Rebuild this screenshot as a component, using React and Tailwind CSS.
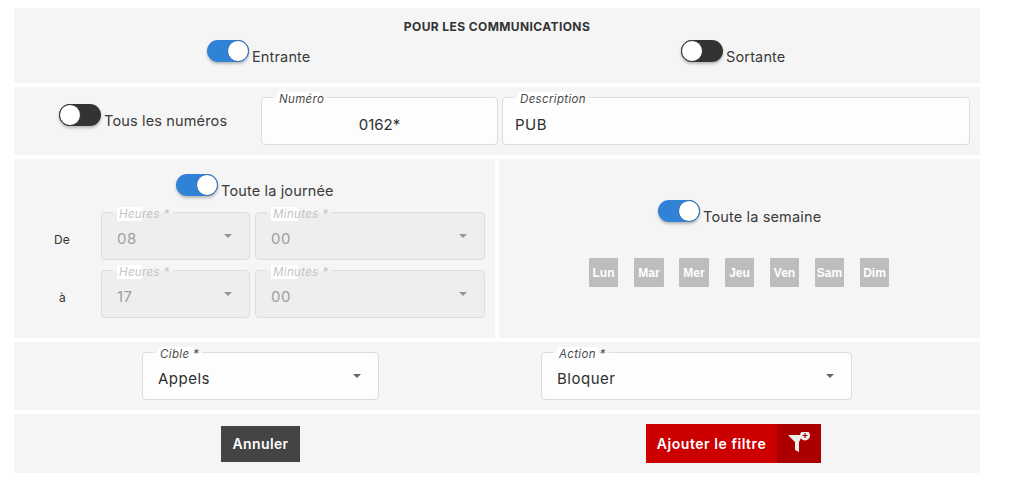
import React from "react";

const font = "font-['Inter','Liberation_Sans',sans-serif]";

const Toggle = ({ on, label, className = "" }) => {
  return (
    <div className={`flex items-start ${className}`}>
      <div
        className={`flex h-[22px] w-[42px] rounded-full shadow-[0_2px_3px_rgba(0,0,0,0.25)] ${
          on ? "justify-end bg-[#3082d6]" : "justify-start bg-[#333333]"
        }`}
      >
        <div
          className={`h-[22px] w-[22px] rounded-full border bg-white ${
            on ? "border-[#2b6cb0]" : "border-[#333333]"
          }`}
        />
      </div>
      <span className="mt-[8px] ml-[3px] text-[14.5px] leading-[18px] tracking-[0.15px] text-[#3a3a3a]">
        {label}
      </span>
    </div>
  );
};

const Caret = ({ color }) => (
  <div className={`h-0 w-0 border-x-[4px] border-t-[4px] border-x-transparent ${color}`} />
);

const Field = ({ label, patch, value, className = "", disabled, select, center, valuePad = "pl-[15px]" }) => {
  return (
    <div
      className={`relative flex h-[48px] items-center rounded-[4px] border border-[#dddddd] ${
        disabled ? "bg-[#eeeeee]" : "bg-[#fdfdfd]"
      } ${className}`}
    >
      {/* legend : coupe la bordure, petit fond blanc plus court que le texte */}
      <div className="absolute top-[-6px] left-[11px] pr-[3px] pl-[6px]">
        <div className="absolute inset-x-0 top-[5px] h-[1px] bg-[#f5f5f5]" />
        <div className={`absolute top-0 left-[4px] h-[14px] bg-white ${patch}`} />
        <span
          className={`relative block text-[11.5px] leading-[14px] tracking-[0.35px] italic ${
            disabled ? "text-[#c4c4c4]" : "text-[#4a4a4a]"
          }`}
        >
          {label}
        </span>
      </div>
      <span
        className={`flex-1 text-[15px] leading-[20px] ${
          center ? "text-center" : `tracking-[0.5px] ${valuePad}`
        } ${select ? "mt-[5px]" : "mt-[7px]"} ${disabled ? "text-[#9e9e9e]" : "text-[#2f2f2f]"}`}
      >
        {value}
      </span>
      {select && (
        <div className="mr-[17px]">
          <Caret color={disabled ? "border-t-[#959595]" : "border-t-[#666666]"} />
        </div>
      )}
    </div>
  );
};

const days = [
  { name: "Lun", size: "w-[29px]" },
  { name: "Mar", size: "w-[30px]" },
  { name: "Mer", size: "w-[30px] -ml-[1px]" },
  { name: "Jeu", size: "w-[29px]" },
  { name: "Ven", size: "w-[29px]" },
  { name: "Sam", size: "w-[29px]" },
  { name: "Dim", size: "w-[29px]" },
];

const App = () => {
  return (
    <div className={`h-[482px] w-[1009px] bg-white pt-[8px] pl-[14px] ${font}`}>
      <div className="flex w-[966px] flex-col gap-[4px]">
        {/* sens des communications */}
        <div className="h-[75px] bg-[#f5f5f5] pt-[11px]">
          <h2 className="text-center text-[12px] leading-[16px] font-bold tracking-[0.4px] text-[#333333]">
            POUR LES COMMUNICATIONS
          </h2>
          <div className="mt-[5px] flex">
            <Toggle on label="Entrante" className="ml-[193px] w-[474px]" />
            <Toggle label="Sortante" />
          </div>
        </div>

        {/* numero */}
        <div className="flex h-[68px] items-start bg-[#f5f5f5] pt-[10px]">
          <Toggle label="Tous les numéros" className="mt-[7px] ml-[45px] w-[202px]" />
          <Field label="Numéro" patch="w-[43px]" value="0162*" center className="w-[237px]" />
          <Field
            label="Description"
            patch="w-[57px]"
            value="PUB"
            valuePad="pl-[12px]"
            className="ml-[4px] w-[468px]"
          />
        </div>

        {/* horaires */}
        <div className="flex h-[179px] gap-[4px]">
          <div className="w-[481px] bg-[#f5f5f5] pt-[15px]">
            <Toggle on label="Toute la journée" className="ml-[162px]" />
            <div className="mt-[12px] flex flex-col gap-[10px]">
              <div className="flex items-center">
                <span className="mt-[8px] w-[87px] pl-[40px] text-[12px] text-[#333333]">De</span>
                <Field label="Heures *" patch="w-[25px]" value="08" disabled select className="w-[149px]" />
                <Field label="Minutes *" patch="w-[27px]" value="00" disabled select className="ml-[5px] w-[230px]" />
              </div>
              <div className="flex items-center">
                <span className="mt-[8px] w-[87px] pl-[45px] text-[12px] text-[#333333]">à</span>
                <Field label="Heures *" patch="w-[25px]" value="17" disabled select className="w-[149px]" />
                <Field label="Minutes *" patch="w-[27px]" value="00" disabled select className="ml-[5px] w-[230px]" />
              </div>
            </div>
          </div>
          <div className="w-[481px] bg-[#f5f5f5] pt-[41px]">
            <Toggle on label="Toute la semaine" className="ml-[159px]" />
            <div className="mt-[32px] ml-[90px] flex gap-[16px]">
              {days.map((day) => (
                <div
                  key={day.name}
                  className={`flex h-[29px] items-center justify-center rounded-[1px] bg-[#bdbdbd] font-['Liberation_Sans',sans-serif] text-[12px] font-bold text-white ${day.size}`}
                >
                  {day.name}
                </div>
              ))}
            </div>
          </div>
        </div>

        {/* cible et action */}
        <div className="flex h-[68px] items-start bg-[#f5f5f5] pt-[10px]">
          <Field label="Cible *" patch="w-[35px]" value="Appels" select className="ml-[128px] w-[237px]" />
          <Field label="Action *" patch="w-[41px]" value="Bloquer" select className="ml-[162px] w-[311px]" />
        </div>

        {/* boutons */}
        <div className="flex h-[59px] items-center bg-[#f5f5f5]">
          <button className="ml-[207px] h-[36px] w-[79px] bg-[#444444] text-[14px] font-semibold tracking-[0.4px] text-white">
            Annuler
          </button>
          <button className="ml-[346px] flex h-[39px] w-[175px] items-center bg-[#cc0000] text-white">
            <span className="w-[131px] text-center text-[14px] font-semibold tracking-[0.55px]">
              Ajouter le filtre
            </span>
            <span className="flex h-full w-[44px] items-center justify-center bg-[#ac0000]">
              <svg width="24" height="23" viewBox="0 0 24 23">
                <path d="M1 3h14.500L12 10v10l-4-2v-8z" fill="#eeeeee" />
                <circle cx="18" cy="3.500" r="5" fill="#eeeeee" />
                <path d="M18 1v5M15.500 3.500h5" stroke="#ac0000" strokeWidth="1.200" />
              </svg>
            </span>
          </button>
        </div>
      </div>
    </div>
  );
};

export default App;
